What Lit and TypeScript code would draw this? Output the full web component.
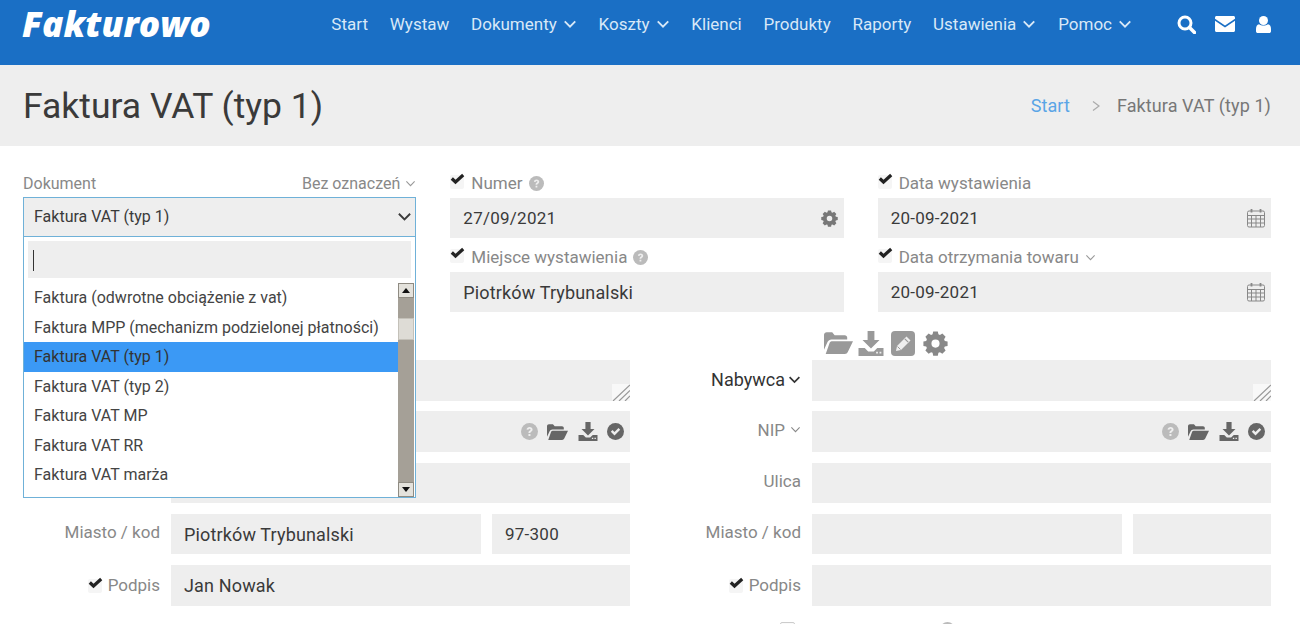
import { LitElement, css, html, svg } from 'lit';
import { customElement } from 'lit/decorators.js';

const chevron = (size: number, sw = 1.6) => html`<svg class="chev" width=${size} height=${size} viewBox="0 0 12 12" fill="none" stroke="currentColor" stroke-width=${sw}><path d="M1.5 3.8 6 8.3l4.5-4.5"/></svg>`;

const check = html`<svg class="check" width="15" height="16" viewBox="0 0 15 16"><rect x="0" y="2" width="14" height="14" rx="2" fill="#f5f5f5"/><path d="M1.800 5.500 5.500 9 13.200 2" fill="none" stroke="#222" stroke-width="3.200"/></svg>`;

const helpIcon = (size: number) => html`<svg class="ic" width=${size} height=${size} viewBox="0 0 16 16"><circle cx="8" cy="8" r="8" fill="#bbb"/><path d="M5.200 6.200C5.400 4.600 6.600 3.700 8.100 3.700c1.600 0 2.800 1 2.800 2.400 0 1.100-.7 1.700-1.300 2.100-.5.300-.8.600-.8 1.200H7c0-1.100.4-1.700 1.100-2.100.5-.3.900-.6.900-1.100 0-.5-.4-.9-.9-.9-.6 0-1 .4-1.100 1zM7 10.300h1.900v1.900H7z" fill="#eee"/></svg>`;

const folderIcon = (w: number, h: number, fill: string) => html`<svg class="ic" width=${w} height=${h} viewBox="0 0 24 18" fill=${fill}><path d="M0 2.200C0 1 1 0 2.200 0h4.600l2 2.500h8.400c1.100 0 2 .9 2 2V6H6.200c-1.500 0-2.600.8-3.200 2L0 14.500z"/><path d="M6.400 7.600H24l-4.300 8.800c-.5 1-1.300 1.600-2.400 1.600H1.400l3-8.300c.3-1.300 1-2.100 2-2.100z"/></svg>`;

const downloadIcon = (w: number, h: number, fill: string) => html`<svg class="ic" width=${w} height=${h} viewBox="0 0 22 22" fill=${fill}><path d="M8 0h6v8h4.500L11 15.500 3.500 8H8z"/><path d="M0 15h5.500l3 3h5l3-3H22v7H0z"/><path d="M15.500 18.200h1.600v1.600h-1.600zM18.500 18.200h1.600v1.600h-1.600z" fill="#eee"/></svg>`;

const okIcon = html`<svg class="ic" width="17" height="17" viewBox="0 0 17 17"><circle cx="8.500" cy="8.500" r="8.500" fill="#666"/><path d="M3.800 8.700 5.500 7l2 2 4-4 1.700 1.700-5.700 5.700z" fill="#eee"/></svg>`;

const gearPath = svg`<path fill-rule="evenodd" d="M7 0h4l.5 2.400 1.300.6 2.100-1.300 2.800 2.800L16.400 6.600l.6 1.400 2.400.5v3.800L17 12.800l-.6 1.300 1.300 2.100-2.800 2.800-2.100-1.300-1.300.6L11 20.700H7l-.5-2.400-1.300-.6-2.100 1.300L.3 16.200l1.300-2.100-.6-1.300-2.400-.5V8.500L1 8l.6-1.400L.3 4.500l2.800-2.800 2.100 1.300 1.300-.6zM9 6.800a3.500 3.500 0 1 0 0 7 3.500 3.500 0 0 0 0-7z"/>`;

const gearIcon = (size: number, fill: string) => html`<svg class="ic" width=${size} height=${size} viewBox="-1.500 -0.500 21 21.500" fill=${fill}>${gearPath}</svg>`;

const pencilIcon = html`<svg class="ic" width="24" height="25" viewBox="0 0 24 25"><rect width="24" height="25" rx="4" fill="#999"/><path d="M5 20l1-5L15.500 5.500l4 4L10 19z" fill="#eee"/><path d="M6.500 15.500l3 3" stroke="#999" stroke-width="1" fill="none"/><path d="M13.800 7.800l3.400 3.400" stroke="#999" stroke-width="1.200" fill="none"/></svg>`;

const calendarIcon = html`<svg class="ic" width="18" height="20" viewBox="0 0 18 20" fill="none" stroke="#888" stroke-width="1"><rect x=".5" y="3" width="17" height="16" rx="1.500"/><path d="M.5 7.500h17M.5 11h17M.5 15h17M4.500 7.500V19M9 7.500V19M13.500 7.500V19"/><path d="M4.500 1v3.500M13.500 1v3.500" stroke-width="1.800"/></svg>`;

const options = [
  'Faktura (odwrotne obciążenie z vat)',
  'Faktura MPP (mechanizm podzielonej płatności)',
  'Faktura VAT (typ 1)',
  'Faktura VAT (typ 2)',
  'Faktura VAT MP',
  'Faktura VAT RR',
  'Faktura VAT marża',
];

@customElement('app-root')
export class AppRoot extends LitElement {
  static styles = css`
    :host {
      display: block;
      height: 624px;
      overflow: hidden;
      background: #fff;
      font-family: Roboto, "Liberation Sans", sans-serif;
      color: #333;
    }
    svg { display: block; flex: none; }

    header {
      height: 65px;
      background: #1a6fc5;
      display: flex;
      align-items: flex-start;
      padding: 0 29px 0 22px;
      color: #d8e8f7;
      font-size: 17px;
    }
    .logo {
      font-family: "Open Sans", sans-serif;
      font-weight: 800;
      font-style: italic;
      font-size: 35.300px;
      line-height: 46px;
      color: #fff;
    }
    nav {
      margin-left: auto;
      display: flex;
      gap: 21.800px;
      height: 48px;
      align-items: center;
    }
    nav span { display: flex; align-items: center; gap: 6px; }
    .tools { display: flex; align-items: center; gap: 19px; height: 48px; margin-left: 45px; }
    .tools .user { margin-left: 2px; }

    .title-bar {
      height: 81px;
      background: #eee;
      display: flex;
      align-items: center;
      justify-content: space-between;
      padding: 0 29px 0 23px;
    }
    h1 { margin: 0; font-weight: 400; font-size: 35.500px; color: #3a3a3a; }
    .crumbs { display: flex; align-items: center; font-size: 18px; color: #777; letter-spacing: 0.1px; }
    .crumbs a { color: #5aa5e6; }
    .crumbs svg { margin: 0 16px 0 21px; }

    main { padding: 29px 29px 0 23px; }
    .top {
      display: grid;
      grid-template-columns: repeat(3, 1fr);
      column-gap: 34px;
    }
    .fld { display: flex; flex-direction: column; }
    .lab {
      height: 23px;
      box-sizing: border-box;
      padding-bottom: 7px;
      display: flex;
      align-items: center;
      gap: 6px;
      color: #888;
      font-size: 17px;
      line-height: 16px;
      white-space: nowrap;
    }
    .lab.spread { height: 22px; padding-bottom: 5px; justify-content: space-between; font-size: 16px; }
    .lab .right { display: flex; align-items: center; gap: 5px; }
    .lab .chev { color: #999; }
    .lab .check { margin-top: -5px; }
    .input {
      height: 40px;
      background: #eee;
      display: flex;
      align-items: center;
      justify-content: space-between;
      padding: 0 6px 0 13px;
      font-size: 17px;
      letter-spacing: 0.25px;
      color: #3a3a3a;
      box-sizing: border-box;
    }
    .input.txt { font-size: 18px; letter-spacing: 0.15px; }
    .fld + .fld { margin-top: 11px; }

    .doc { position: relative; height: 63px; }
    .select {
      height: 40px;
      border: 1px solid #6fb1d8;
      background: #eee;
      box-sizing: border-box;
      display: flex;
      align-items: center;
      justify-content: space-between;
      padding: 0 3px 1px 10px;
      font-size: 16px;
      color: #3a3a3a;
    }
    .drop {
      position: absolute;
      top: 61px;
      left: 0;
      right: 0;
      height: 262px;
      box-sizing: border-box;
      background: #fff;
      border: 1px solid #6fb1d8;
      z-index: 5;
      display: flex;
      flex-direction: column;
    }
    .search {
      margin: 4px 4px 0;
      height: 37px;
      background: #eee;
      flex: none;
      display: flex;
      align-items: center;
      padding-left: 5px;
    }
    .caret { width: 1px; height: 21px; background: #333; margin-top: 1px; }
    .listwrap { flex: 1; display: flex; min-height: 0; }
    .list { flex: 1; font-size: 16px; color: #444; padding-top: 5px; }
    .opt { height: 29.500px; line-height: 29.500px; padding-left: 10px; white-space: nowrap; }
    .opt.sel { background: #3b99f5; color: #333; }
    .scroll {
      width: 16px;
      flex: none;
      background: #a5a097;
      box-sizing: border-box;
      position: relative;
      margin: 5px 1px 0 0;
      display: flex;
      flex-direction: column;
      justify-content: space-between;
    }
    .sbtn {
      height: 15px;
      background: #e4e2dc;
      display: flex;
      align-items: center;
      justify-content: center;
      border: 1px solid #8f8b82;
      box-sizing: border-box;
    }
    .thumb {
      position: absolute;
      top: 35px;
      left: 0;
      right: 0;
      height: 22px;
      background: #dedcd6;
      border: 1px solid #c4c1b9;
      box-sizing: border-box;
    }

    .tools-row {
      height: 48px;
      box-sizing: border-box;
      padding: 14px 0 0 801px;
      display: flex;
      align-items: center;
      gap: 5px;
    }
    .tools-row .pencil { margin-left: 2px; }
    .tools-row .gear { margin-left: 3px; }

    .parties {
      display: grid;
      grid-template-columns: 1fr 1fr;
      column-gap: 34px;
    }
    .party { display: flex; flex-direction: column; gap: 10.750px; }
    .row {
      display: grid;
      grid-template-columns: 137px 1fr;
      column-gap: 11px;
      align-items: center;
      height: 40.500px;
    }
    .row .name {
      display: flex;
      justify-content: flex-end;
      align-items: center;
      gap: 5px;
      color: #888;
      font-size: 17px;
      padding-bottom: 4px;
    }
    .row .name.sign { padding-bottom: 1px; }
    .row .name.dark { color: #333; font-size: 18px; gap: 3px; padding-bottom: 1px; }
    .row .name .chev { flex: none; }
    .row .input { height: 40.500px; }
    .city { display: grid; grid-template-columns: 1fr 138px; column-gap: 11px; }
    .area { height: 40.500px; background: #eee; position: relative; }
    .grip {
      position: absolute;
      right: 0;
      bottom: 0;
      width: 18px;
      height: 17px;
      background: #f8f8f8;
    }
    .icons { display: flex; align-items: center; gap: 9.500px; }

    .extra {
      display: flex;
      align-items: flex-start;
      padding-left: 757px;
      margin-top: 16px;
      font-size: 17px;
      line-height: 17px;
      color: #555;
      word-spacing: 17px;
    }
    .box { width: 13px; height: 13px; border: 1px solid #ccc; border-radius: 2px; background: #fafafa; margin-right: 18px; }
    .extra .ic { margin-left: 15px; }
  `;

  renderParty(city: string, code: string, sign: string, buyer: boolean) {
    return html`
      <div class="party">
        <div class="row">
          <div class="name dark">${buyer ? html`Nabywca ${chevron(13)}` : ''}</div>
          <div class="area"><svg class="grip" viewBox="0 0 18 17" fill="none" stroke="#999" stroke-width="1.200"><path d="M1 17 18 1M7 17 18 6.500M13 17l5-5"/></svg></div>
        </div>
        <div class="row">
          <div class="name">${buyer ? html`NIP ${chevron(11, 1.200)}` : ''}</div>
          <div class="input">
            <span></span>
            <span class="icons">${helpIcon(17)}${folderIcon(21, 16, '#666')}${downloadIcon(20, 19, '#666')}${okIcon}</span>
          </div>
        </div>
        <div class="row">
          <div class="name">${buyer ? 'Ulica' : ''}</div>
          <div class="input"></div>
        </div>
        <div class="row">
          <div class="name">Miasto / kod</div>
          <div class="city">
            <div class="input txt">${city}</div>
            <div class="input">${code}</div>
          </div>
        </div>
        <div class="row">
          <div class="name sign">${check} Podpis</div>
          <div class="input txt">${sign}</div>
        </div>
      </div>
    `;
  }

  render() {
    return html`
      <header>
        <div class="logo">Fakturowo</div>
        <nav>
          <span>Start</span>
          <span>Wystaw</span>
          <span>Dokumenty ${chevron(14)}</span>
          <span>Koszty ${chevron(14)}</span>
          <span>Klienci</span>
          <span>Produkty</span>
          <span>Raporty</span>
          <span>Ustawienia ${chevron(14)}</span>
          <span>Pomoc ${chevron(14)}</span>
        </nav>
        <div class="tools">
          <svg width="19" height="19" viewBox="0 0 19 19" fill="none" stroke="#fff"><circle cx="8" cy="8" r="6" stroke-width="3"/><path d="M12.500 12.500 17.500 17.500" stroke-width="3.500" stroke-linecap="round"/></svg>
          <svg width="20" height="16" viewBox="0 0 20 16" fill="#fff"><path d="M1.500 0h17C19.300 0 20 .7 20 1.500V2.800l-10 6.800L0 2.800V1.500C0 .7.700 0 1.500 0z"/><path d="M0 4.800 10 11.500l10-6.700V14.500c0 .8-.7 1.500-1.500 1.500h-17C.7 16 0 15.300 0 14.500z"/></svg>
          <svg class="user" width="15" height="17" viewBox="0 0 15 17" fill="#fff"><circle cx="7.500" cy="4.500" r="4.500"/><path d="M3 8.200c1.200.9 2.800 1.400 4.500 1.400s3.300-.5 4.500-1.400c2 .4 3 2.300 3 4.800v2.200c0 1-.8 1.800-1.800 1.800H1.800C.8 17 0 16.200 0 15.200V13c0-2.500 1-4.400 3-4.800z"/></svg>
        </div>
      </header>
      <div class="title-bar">
        <h1>Faktura VAT (typ 1)</h1>
        <div class="crumbs"><a>Start</a><svg width="10" height="12" viewBox="0 0 10 12" fill="none" stroke="#aaa" stroke-width="1.200"><path d="M2 1.500 8 6l-6 4.500"/></svg><span>Faktura VAT (typ 1)</span></div>
      </div>
      <main>
        <div class="top">
          <div class="doc">
            <div class="lab spread"><span>Dokument</span><span class="right">Bez oznaczeń ${chevron(11, 1.200)}</span></div>
            <div class="select">Faktura VAT (typ 1) ${chevron(15, 1.500)}</div>
            <div class="drop">
              <div class="search"><div class="caret"></div></div>
              <div class="listwrap">
                <div class="list">
                  ${options.map((o) => html`<div class="opt ${o === 'Faktura VAT (typ 1)' ? 'sel' : ''}">${o}</div>`)}
                </div>
                <div class="scroll">
                  <div class="sbtn"><svg width="8" height="5" viewBox="0 0 8 5"><path d="M4 0 8 5H0z" fill="#111"/></svg></div>
                  <div class="thumb"></div>
                  <div class="sbtn"><svg width="8" height="5" viewBox="0 0 8 5"><path d="M0 0h8L4 5z" fill="#111"/></svg></div>
                </div>
              </div>
            </div>
          </div>
          <div>
            <div class="fld">
              <div class="lab">${check}Numer ${helpIcon(15)}</div>
              <div class="input">27/09/2021 ${gearIcon(17, '#777')}</div>
            </div>
            <div class="fld">
              <div class="lab">${check}Miejsce wystawienia ${helpIcon(15)}</div>
              <div class="input txt">Piotrków Trybunalski</div>
            </div>
          </div>
          <div>
            <div class="fld">
              <div class="lab">${check}Data wystawienia</div>
              <div class="input">20-09-2021 ${calendarIcon}</div>
            </div>
            <div class="fld">
              <div class="lab">${check}Data otrzymania towaru ${chevron(11, 1.200)}</div>
              <div class="input">20-09-2021 ${calendarIcon}</div>
            </div>
          </div>
        </div>
        <div class="tools-row">
          ${folderIcon(29, 22, '#999')}${downloadIcon(26, 25, '#999')}
          <span class="pencil">${pencilIcon}</span>
          <span class="gear">${gearIcon(25, '#888')}</span>
        </div>
        <div class="parties">
          ${this.renderParty('Piotrków Trybunalski', '97-300', 'Jan Nowak', false)}
          ${this.renderParty('', '', '', true)}
        </div>
        <div class="extra"><span class="box"></span><span>Rozmiar 000</span>${helpIcon(15)}</div>
      </main>
    `;
  }
}
